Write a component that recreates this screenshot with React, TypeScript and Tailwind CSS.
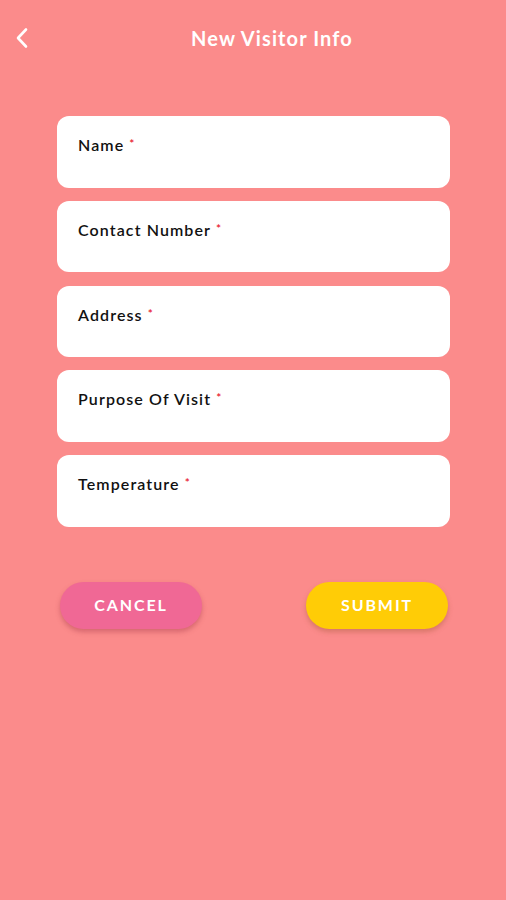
import React from "react"

const fields = ["Name", "Contact Number", "Address", "Purpose Of Visit", "Temperature"]

export default function App() {
  return (
    <div
      className="w-[506px] h-[900px] bg-[#fb8b8b] flex flex-col"
      style={{ fontFamily: "Lato, 'Noto Sans', sans-serif" }}
    >
      <header className="h-[76px] flex items-center relative">
        <button className="absolute left-[13px] top-[27px] w-[18px] h-[22px] flex items-center justify-center">
          <svg width="14" height="22" viewBox="0 0 14 22" fill="none">
            <path d="M11 2.5L3 11l8 8.5" stroke="white" strokeWidth="2.6" strokeLinecap="round" strokeLinejoin="round" />
          </svg>
        </button>
        <h1 className="w-full pl-[38px] text-center text-white text-[20px] font-bold tracking-[1.1px] -mt-[1px]">
          New Visitor Info
        </h1>
      </header>
      <form className="mt-[40px] ml-[57px] mr-[56px] flex flex-col gap-[13.25px]">
        {fields.map((f) => (
          <div key={f} className="bg-white rounded-[12px] h-[71.5px] px-[21px] pt-[17px]">
            <label className="text-[16px] font-semibold text-[#111] tracking-[1.1px]">
              {f}
              <span className="text-[#e8152a] text-[12px] relative -top-[3px] ml-[5px]">*</span>
            </label>
          </div>
        ))}
      </form>
      <div className="mt-[55px] ml-[60px] mr-[58px] flex justify-between">
        <button className="w-[142px] h-[47px] rounded-full bg-[#f06895] text-white text-[16px] font-bold tracking-[1.9px] shadow-[0_3px_5px_rgba(150,40,60,0.35)]">
          CANCEL
        </button>
        <button className="w-[142px] h-[47px] rounded-full bg-[#ffcc06] text-white text-[16px] font-bold tracking-[1.9px] shadow-[0_3px_5px_rgba(150,80,40,0.35)]">
          SUBMIT
        </button>
      </div>
    </div>
  )
}
